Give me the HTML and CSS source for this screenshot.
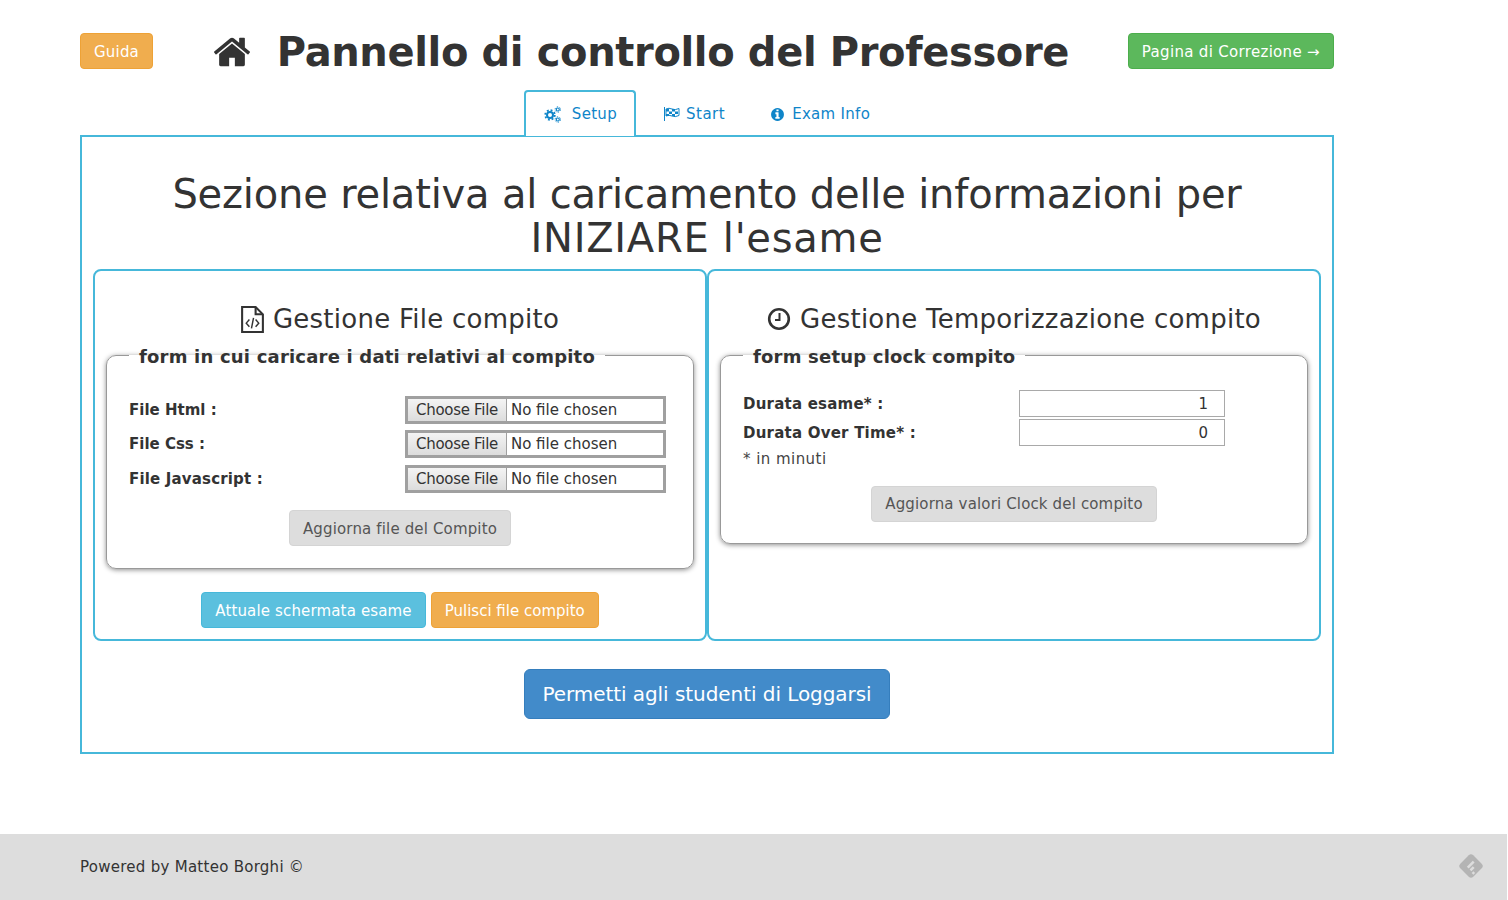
FILE: index.html
```html
<!DOCTYPE html>
<html lang="en">
<head>
    <meta charset="UTF-8">
    <meta name="viewport" content="width=device-width, initial-scale=1.0">
    <title>Pannello di controllo del Professore</title>
    <link rel="stylesheet" href="styles.css">
</head>
<body>
    <div id="container">
        <div class="top">
            <button class="btn btn-warning btn-guida">Guida</button>
            <h1 class="title">
                <svg class="home-icon" viewBox="0 0 1792 1792"><path fill="currentColor" d="M1472 992v480q0 26-19 45t-45 19h-384v-384h-256v384h-384q-26 0-45-19t-19-45v-480q0-1 .5-3t.5-3l575-474 575 474q1 2 1 6zm223-69l-62 74q-8 9-21 11h-3q-13 0-21-7l-692-577-692 577q-12 8-24 7-13-2-21-11l-62-74q-8-10-7-23.500t11-21.500l719-599q32-26 76-26t76 26l244 204v-195q0-14 9-23t23-9h192q14 0 23 9t9 23v408l219 182q10 8 11 21.500t-7 23.500z"/></svg>
                Pannello di controllo del Professore
            </h1>
            <button class="btn btn-success btn-wide">Pagina di Correzione &#8594;</button>
        </div>

        <ul class="tabs">
            <li class="tab active">
                <svg class="tab-icon cogs-icon" viewBox="0 0 17 17"><g fill="none" stroke="currentColor"><circle cx="6" cy="9" r="3" stroke-width="2"/><circle cx="6" cy="9" r="4.800" stroke-width="1.800" stroke-dasharray="1.900 1.870"/><circle cx="13.800" cy="3.500" r="1.500" stroke-width="1.200"/><circle cx="13.800" cy="13.500" r="1.500" stroke-width="1.200"/><circle cx="13.800" cy="3.500" r="2.700" stroke-width="1" stroke-dasharray="1.400 1.430"/><circle cx="13.800" cy="13.500" r="2.700" stroke-width="1" stroke-dasharray="1.400 1.430"/></g></svg>
                Setup
            </li>
            <li class="tab tab-start">
                <svg class="tab-icon flag-icon" viewBox="0 0 16 14"><path fill="currentColor" d="M0 0h1v14H0z"/><path fill="none" stroke="currentColor" d="M2 2q3-1.500 6 0t7-.500v7q-4 2-7 .500t-6 0z"/><path fill="currentColor" d="M2 2h3v2.500H2zM8 2h3v2.500H8zM5 4.500h3V7H5zM11 4.500h3V7h-3zM2 7h3v2H2zM8 7h3v2H8z"/></svg>
                Start
            </li>
            <li class="tab tab-info">
                <svg class="tab-icon info-icon" viewBox="0 0 1792 1792"><path fill="currentColor" d="M1152 1376v-160q0-14-9-23t-23-9h-96v-512q0-14-9-23t-23-9h-320q-14 0-23 9t-9 23v160q0 14 9 23t23 9h96v320h-96q-14 0-23 9t-9 23v160q0 14 9 23t23 9h448q14 0 23-9t9-23zm-128-896v-160q0-14-9-23t-23-9h-192q-14 0-23 9t-9 23v160q0 14 9 23t23 9h192q14 0 23-9t9-23zm640 416q0 209-103 385.500t-279.500 279.500-385.500 103-385.500-103-279.500-279.500-103-385.500 103-385.500 279.500-279.500 385.500-103 385.500 103 279.500 279.500 103 385.500z"/></svg>
                Exam Info
            </li>
        </ul>

        <div class="main-box">
            <h2 class="section-title">Sezione relativa al caricamento delle informazioni per <span class="second-line">INIZIARE l'esame</span></h2>

            <div class="panels">
                <div class="panel">
                    <h3 class="panel-title">
                        <svg class="title-icon" viewBox="0 0 22 26"><g fill="none" stroke="currentColor" stroke-width="2"><path d="M1 1h13l7 7v17H1z"/><path d="M14 1v7h7"/><path stroke-width="1.400" d="M8 13l-3 3.500 3 3.500M14 13l3 3.500-3 3.500M12 11.500l-2 10"/></g></svg>
                        Gestione File compito
                    </h3>
                    <fieldset class="form-box">
                        <legend>form in cui caricare i dati relativi al compito</legend>
                        <div class="file-rows">
                            <label for="html">File Html :</label>
                            <input type="file" id="html">
                            <label for="css">File Css :</label>
                            <input type="file" id="css">
                            <label class="js-label" for="js">File Javascript :</label>
                            <input type="file" id="js">
                        </div>
                        <div class="center">
                            <button class="btn btn-grey">Aggiorna file del Compito</button>
                        </div>
                    </fieldset>
                    <div class="panel-buttons">
                        <button class="btn btn-info">Attuale schermata esame</button>
                        <button class="btn btn-warning btn-tight">Pulisci file compito</button>
                    </div>
                </div>

                <div class="panel">
                    <h3 class="panel-title">
                        <svg class="title-icon clock-icon" viewBox="0 0 24 24"><g fill="none" stroke="currentColor"><circle cx="12" cy="12" r="9.800" stroke-width="2.600"/><path stroke-width="2" d="M12.500 6v7H8"/></g></svg>
                        Gestione Temporizzazione compito
                    </h3>
                    <fieldset class="form-box form-clock">
                        <legend>form setup clock compito</legend>
                        <div class="clock-rows">
                            <label for="durata">Durata esame* :</label>
                            <input type="number" id="durata" value="1">
                            <label for="over">Durata Over Time* :</label>
                            <input type="number" id="over" value="0">
                        </div>
                        <p class="note">* in minuti</p>
                        <div class="center">
                            <button class="btn btn-grey">Aggiorna valori Clock del compito</button>
                        </div>
                    </fieldset>
                </div>
            </div>

            <div class="center">
                <button class="btn btn-primary btn-lg">Permetti agli studenti di Loggarsi</button>
            </div>
        </div>
    </div>

    <div id="footer">
        <span>Powered by Matteo Borghi &copy;</span>
        <svg class="feed-icon" viewBox="0 0 26 26"><rect x="4.500" y="4.500" width="17" height="17" rx="3" transform="rotate(45 13 13)" fill="#b4b4b4"/><path fill="none" stroke="#ddd" stroke-width="2.400" d="M10 14.500l5.500-5.500M12.500 17l3-3"/><path fill="#ddd" d="M13.600 19.500l1.600-1.600 1.600 1.600-1.600 1.600z"/></svg>
    </div>
</body>
</html>
```

FILE: styles.css
```css
* {
    box-sizing: border-box;
}

body {
    font-family: "DejaVu Sans", sans-serif;
    font-size: 15px;
    letter-spacing: 0.27px;
    color: #333;
    background-color: #fff;
    margin: 0;
    padding: 0 1px 0 0;
    height: 100vh;
    display: flex;
    flex-direction: column;
    overflow: hidden;
}

#container {
    width: 1254px;
    margin-left: 80px;
}

.top {
    display: flex;
    justify-content: space-between;
    align-items: center;
    padding-top: 26px;
    padding-bottom: 14px;
    height: 90px;
}

.title {
    font-size: 40px;
    font-weight: bold;
    line-height: 44px;
    letter-spacing: -0.37px;
    margin: 0;
    padding-top: 2px;
    display: flex;
    align-items: center;
    gap: 25px;
}

.home-icon {
    width: 40px;
    height: 40px;
}

.btn {
    font-family: inherit;
    font-size: 15px;
    line-height: 20px;
    letter-spacing: 0.15px;
    height: 36px;
    padding: 1px 13px 0;
    border: 1px solid transparent;
    border-radius: 4px;
    color: #fff;
    white-space: nowrap;
}

.btn-guida {
    letter-spacing: 0.2px;
}

.btn-wide {
    letter-spacing: 0.32px;
}

.btn-tight {
    letter-spacing: 0;
}

.btn-warning {
    background: #f0ad4e;
    border-color: #eea236;
}

.btn-success {
    background: #5cb85c;
    border-color: #4cae4c;
}

.btn-info {
    background: #5bc0de;
    border-color: #46b8da;
}

.btn-primary {
    background: #428bca;
    border-color: #357ebd;
}

.btn-grey {
    background: #ddd;
    border-color: #d4d4d4;
    color: #555;
}

.form-clock .btn {
    padding-top: 0;
}

.btn-lg {
    font-size: 20px;
    letter-spacing: -0.06px;
    height: 50px;
    padding: 0 17px;
    border-radius: 6px;
}

.tabs {
    list-style: none;
    margin: 0 0 -1px 0;
    padding: 0;
    display: flex;
    justify-content: center;
    gap: 7px;
    position: relative;
    z-index: 1;
}

.tab {
    height: 46px;
    padding: 0 18px;
    display: flex;
    align-items: center;
    gap: 11px;
    letter-spacing: 0.3px;
    color: #0f85c9;
    border: 2px solid transparent;
    border-bottom: 0;
    border-radius: 4px 4px 0 0;
    background: transparent;
}

.tab.active {
    border-color: #46b8da;
    background: #fff;
    padding-right: 17px;
}

.tab-start {
    gap: 6px;
    letter-spacing: 0.5px;
    margin-left: 1px;
    margin-right: 1px;
}

.tab-info {
    gap: 7px;
    margin-left: -3px;
}

.cogs-icon {
    width: 17px;
    height: 17px;
}

.flag-icon {
    width: 16px;
    height: 14px;
}

.info-icon {
    width: 15px;
    height: 15px;
}

.main-box {
    border: 2px solid #46b8da;
    height: 619px;
    padding: 35px 11px 0;
}

.section-title {
    font-size: 40px;
    font-weight: normal;
    line-height: 44px;
    letter-spacing: -0.19px;
    margin: 0 0 9px;
    text-align: center;
}

.second-line {
    letter-spacing: 0.72px;
}

.panels {
    display: flex;
    margin-bottom: 28px;
}

.panel {
    width: 614px;
    height: 372px;
    border: 2px solid #46b8da;
    border-radius: 8px;
    padding: 0 11px;
}

.panel-title {
    font-size: 26px;
    font-weight: normal;
    line-height: 30px;
    letter-spacing: 0.25px;
    margin: 33px 0 0;
    display: flex;
    justify-content: center;
    align-items: center;
    gap: 9px;
}

.title-icon {
    width: 23px;
    height: 27px;
}

.clock-icon {
    width: 24px;
    height: 24px;
}

.form-box {
    border: 1px solid #999;
    border-radius: 10px;
    box-shadow: 0 1px 5px rgba(0, 0, 0, 0.45);
    margin: 7px 0 0;
    padding: 27px 22px 0;
    height: 228px;
    min-width: 0;
}

.form-clock {
    height: 203px;
    padding-top: 21px;
}

.form-box legend {
    font-size: 18px;
    font-weight: bold;
    line-height: 24px;
    letter-spacing: 0.2px;
    padding: 4px 10px 0;
}

.file-rows {
    display: grid;
    grid-template-columns: 276px 261px;
    row-gap: 6px;
    align-items: center;
}

.file-rows label {
    font-weight: bold;
    letter-spacing: 0;
}

.file-rows .js-label {
    letter-spacing: 0.17px;
}

.clock-rows label {
    font-weight: bold;
    letter-spacing: 0.22px;
}

input[type="file"] {
    width: 261px;
    height: 28px;
    font-family: inherit;
    font-size: 15px;
    color: #333;
    border: 3px solid #a0a0a0;
    background: #fff;
}

#js,
.js-label {
    margin-top: 1px;
}

input[type="file"]::file-selector-button {
    font-family: inherit;
    font-size: 15px;
    letter-spacing: -0.3px;
    color: #333;
    height: 22px;
    margin: 0 4px 0 0;
    padding: 0 8px;
    border: solid #a0a0a0;
    border-width: 0 1px 0 0;
    background: linear-gradient(#f4f4f4, #dcdcdc);
}

.center {
    text-align: center;
}

.file-rows + .center {
    margin-top: 17px;
}

.clock-rows {
    display: grid;
    grid-template-columns: 276px 206px;
    row-gap: 2px;
    align-items: center;
}

input[type="number"] {
    width: 206px;
    height: 27px;
    font-family: inherit;
    font-size: 15px;
    color: #333;
    text-align: right;
    padding: 0 1px 0 4px;
    border: 1px solid #a9a9a9;
    background: #fff;
    appearance: textfield;
}

.note {
    margin: 3px 0 17px;
    line-height: 20px;
    letter-spacing: 0.45px;
    color: #444;
}

.panel-buttons {
    display: flex;
    justify-content: center;
    gap: 5px;
    margin-top: 23px;
}

#footer {
    margin-top: auto;
    height: 66px;
    background: #ddd;
    padding: 0 22px 0 80px;
    display: flex;
    justify-content: space-between;
    align-items: center;
}

.feed-icon {
    width: 28px;
    height: 28px;
    margin-top: -2px;
}
```
